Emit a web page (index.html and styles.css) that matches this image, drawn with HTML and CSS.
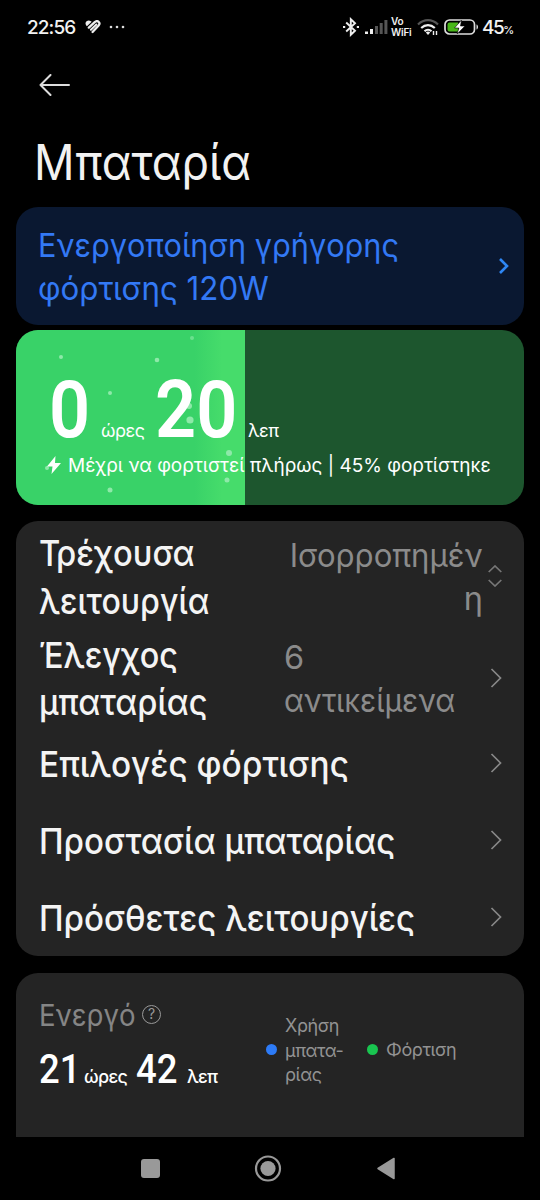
FILE: index.html
```html
<!DOCTYPE html>
<html lang="el">
<head>
<meta charset="utf-8">
<title>Μπαταρία</title>
<link rel="stylesheet" href="styles.css">
</head>
<body>
<div class="screen">
  <header class="status">
    <span class="clock">22:56</span>
    <svg class="heart" width="16" height="14" viewBox="0 0 16 14" fill="none" stroke="#eee" stroke-linecap="round"><path d="M2 5.200C0 2.500 3 .2 5.500 1.800L2.200 5Z" fill="#eee" stroke-width="1.500"/><path d="M3.800 7.600 9.700 2.100C12.500-.2 16 2.500 13.600 5.600L7.600 12" stroke-width="2.300"/><path d="M5.900 9.800 11.400 4.500" stroke-width="2"/></svg>
    <svg class="dots" width="16" height="4" viewBox="0 0 16 4" fill="#ddd"><circle cx="2" cy="2" r="1.300"/><circle cx="8" cy="2" r="1.300"/><circle cx="14" cy="2" r="1.300"/></svg>
    <div class="status-right">
      <svg class="bt" width="18" height="20" viewBox="0 0 18 20" fill="none" stroke="#eee" stroke-width="1.900"><path d="M4.200 5.500 13 13.700 8.800 17.800V2.200L13 6.300 4.200 14.500"/><path d="M1 10h2.200M14.800 10H17"/></svg>
      <svg class="signal" width="23" height="15" viewBox="0 0 23 15"><path fill="#eee" d="M0 11.500h3V14H0zM5 9h3v5H5z"/><path fill="#555" d="M10 6h3v8h-3zM14.700 3h3v11h-3zM19.400 0h3v14h-3z"/></svg>
      <span class="vowifi"><span>Vo</span><span>WiFi</span></span>
      <svg class="wifi" width="22" height="17" viewBox="0 0 22 17" fill="none" stroke-width="2.200"><path d="M1 5.500C7-.3 15-.3 21 5.500" stroke="#555"/><path d="M4.200 9c4-3.800 9.600-3.800 13.600 0M7.500 12.200c2-1.800 5-1.800 7 0" stroke="#eee"/><path d="m11 16-2.200-2.500a3.500 3.500 0 0 1 4.400 0z" fill="#eee"/><path d="M16.500 12v4M19.500 12v4" stroke="#eee" stroke-width="1.400"/></svg>
      <svg class="cell" width="36" height="16" viewBox="0 0 36 16"><rect x="1" y="1" width="29.500" height="14" rx="4.500" fill="none" stroke="#ddd" stroke-width="1.700"/><path d="M5.500 3.500H14v9H5.500a2 2 0 0 1-2-2v-5a2 2 0 0 1 2-2z" fill="#48b618"/><path d="M32.500 5.500c2 .5 2 4.500 0 5z" fill="#ddd"/><path d="M17.500 1 10.500 9h4.300l-1.600 6L21 7h-4.500z" fill="#fff" stroke="#000" stroke-width=".6"/></svg>
      <span class="pct">45<small>%</small></span>
    </div>
  </header>
  <main class="page">
    <svg class="back" width="32" height="22" viewBox="0 0 32 22" fill="none" stroke="#ddd" stroke-width="2" stroke-linecap="round" stroke-linejoin="round"><path d="M30 11H1.500M11.500 1 1.500 11l10 10"/></svg>
    <h1 class="title">Μπαταρία</h1>
    <section class="banner">
      <p class="banner-text"><span class="b1">Ενεργοποίηση γρήγορης</span><br><span class="b2">φόρτισης 120W</span></p>
      <svg width="12" height="18" viewBox="0 0 12 18" fill="none" stroke="#2e87f5" stroke-width="2.600"><path d="m2 2 7 7-7 7"/></svg>
    </section>
    <section class="charge">
      <div class="charge-fill">
        <svg width="229" height="175" viewBox="0 0 229 175" fill="#8ee9a9"><circle cx="45" cy="27" r="2"/><circle cx="141" cy="30" r="2.300"/><circle cx="176" cy="8" r="2" opacity=".6"/><circle cx="94" cy="63" r="2"/><circle cx="173" cy="76" r="3"/><circle cx="174" cy="90" r="3.600"/><circle cx="213" cy="123" r="3"/><circle cx="211" cy="150" r="2.500"/><circle cx="94" cy="160" r="2.500"/><circle cx="31" cy="138" r="2"/></svg>
      </div>
      <div class="charge-body">
        <div class="time"><b class="n0">0</b><span class="u1">ώρες</span><b class="n20">20</b><span class="u2">λεπ</span></div>
        <div class="until"><svg width="14" height="18" viewBox="0 0 14 18" fill="#fff"><path d="M8.500 0 0 10.500h5.500L4.500 18 14 7H8z"/></svg><span>Μέχρι να φορτιστεί πλήρως | 45% φορτίστηκε</span></div>
      </div>
    </section>
    <section class="list">
      <div class="row mode"><span class="label"><span class="l1">Τρέχουσα</span><br><span class="l2">λειτουργία</span></span><span class="value right"><span class="v1">Ισορροπημέν</span><br>η</span>
        <svg class="updown" width="14" height="22" viewBox="0 0 14 22" fill="none" stroke="#777" stroke-width="1.700"><path d="m.7 7 6.300-6 6.300 6M.7 15 7 21l6.300-6"/></svg></div>
      <div class="row check"><span class="label"><span class="l3">Έλεγχος</span><br><span class="l4">μπαταρίας</span></span><span class="value left">6<br><span class="v2">αντικείμενα</span></span>
        <svg class="chev" width="12" height="20" viewBox="0 0 12 20" fill="none" stroke="#888" stroke-width="1.700"><path d="m1.500 1 9 9-9 9"/></svg></div>
      <div class="row"><span class="label l5">Επιλογές φόρτισης</span><svg class="chev" width="12" height="20" viewBox="0 0 12 20" fill="none" stroke="#888" stroke-width="1.700"><path d="m1.500 1 9 9-9 9"/></svg></div>
      <div class="row"><span class="label l6">Προστασία μπαταρίας</span><svg class="chev" width="12" height="20" viewBox="0 0 12 20" fill="none" stroke="#888" stroke-width="1.700"><path d="m1.500 1 9 9-9 9"/></svg></div>
      <div class="row"><span class="label l7">Πρόσθετες λειτουργίες</span><svg class="chev" width="12" height="20" viewBox="0 0 12 20" fill="none" stroke="#888" stroke-width="1.700"><path d="m1.500 1 9 9-9 9"/></svg></div>
    </section>
    <section class="usage">
      <div class="active">
        <div class="active-head"><span class="active-label">Ενεργό</span><span class="help">?</span></div>
        <div class="active-time"><b class="a1">21</b><span class="a2">ώρες</span><b class="a3">42</b><span class="a4">λεπ</span></div>
      </div>
      <div class="legend"><i class="dot blue"></i><span class="g1">Χρήση<br>μπατα-<br>ρίας</span><i class="dot green"></i><span class="g2">Φόρτιση</span></div>
    </section>
  </main>
  <nav class="nav">
    <svg width="540" height="63" viewBox="0 0 540 63" fill="#999"><rect x="141" y="22" width="19" height="19" rx="3"/><circle cx="268" cy="31.500" r="12" fill="none" stroke="#999" stroke-width="2.200"/><circle cx="268" cy="31.500" r="7.600"/><path d="M394 21.500v20l-16-10z" stroke="#999" stroke-width="1.500" stroke-linejoin="round"/></svg>
  </nav>
</div>
</body>
</html>
```
FILE: styles.css
```css
* { box-sizing: border-box; }
body { margin: 0; background: #000; font-family: Inter, "Noto Sans", sans-serif; color: #f2f2f2; }
h1, p { margin: 0; font-weight: 400; }
svg { display: block; flex: none; }
span { white-space: nowrap; }
.screen { width: 540px; height: 1200px; overflow: hidden; display: flex; flex-direction: column; background: #000; }

.status { height: 54px; padding: 0 27px; display: flex; align-items: center; flex: none; }
.clock { width: 48px; font-size: 19px; font-weight: 500; letter-spacing: -0.900px; }
.heart { margin-left: 10px; }
.dots { margin-left: 8px; }
.status-right { margin-left: auto; display: flex; align-items: center; }
.signal { margin-left: 5px; }
.vowifi { display: flex; flex-direction: column; width: 21px; margin-left: 3px; font-size: 10px; line-height: 11px; font-weight: 600; letter-spacing: -0.200px; }
.vowifi span { height: 11px; }
.wifi { margin-left: 5px; }
.cell { margin-left: 5px; }
.pct { width: 31px; margin-left: 2px; font-size: 19px; font-weight: 500; letter-spacing: -1.500px; }
.pct small { font-size: 11px; }

.page { height: 1083px; padding: 0 16px; flex: none; overflow: hidden; }
.back { margin: 20px 0 0 23px; }
.title { font-size: 49px; line-height: 60px; margin: 37px 0 0 18px; color: #f2f2f2; white-space: nowrap; height: 74px; transform: scaleX(0.915); transform-origin: left; }

.b1, .b2, .l1, .l2, .l3, .l4, .l5, .l6, .l7, .v1, .v2 { display: inline-block; transform-origin: left; }

.banner { height: 118px; border-radius: 22px; background: #0a1831; display: flex; align-items: center; justify-content: space-between; padding: 2px 14px 0 22px; color: #3379f5; }
.banner-text { font-size: 33px; line-height: 43px; }
.banner svg { margin-bottom: 3px; }
.b1 { transform: scaleX(0.929); }
.b2 { transform: scaleX(0.947); }

.charge { height: 175px; margin-top: 5px; border-radius: 22px; background: #1d562e; overflow: hidden; display: grid; color: #fff; }
.charge-fill { grid-area: 1 / 1; width: 229px; background: linear-gradient(90deg, #39d268 78%, #46dc6b 90%); }
.charge-body { grid-area: 1 / 1; z-index: 1; padding: 34px 0 0 31px; }
.time { display: flex; align-items: baseline; height: 89px; line-height: 92px; white-space: nowrap; }
.time b { font: 600 80px/92px Roboto, sans-serif; transform: scaleX(0.9); transform-origin: left; }
.time span { font-size: 18px; letter-spacing: -0.500px; }
.n0 { width: 52px; margin-left: 2px; }
.u1 { width: 54px; }
.n20 { width: 93px; }
.until { display: flex; align-items: center; height: 24px; font-size: 19px; }
.until span { margin-left: 7px; }

.list { height: 435px; margin-top: 16px; border-radius: 22px; background: #242424; padding: 6px 22px 0 23px; }
.row { display: flex; align-items: center; height: 77px; }
.mode { height: 101px; }
.check { height: 98px; padding-top: 4px; }
.label { font-size: 36px; line-height: 47.500px; font-weight: 500; color: #f4f4f4; }
.l1 { transform: scaleX(0.908); }
.l2 { transform: scaleX(0.892); }
.l3 { transform: scaleX(0.9); }
.l4 { transform: scaleX(0.905); }
.l5 { transform: scaleX(0.928); }
.l6 { transform: scaleX(0.918); }
.l7 { transform: scaleX(0.918); }
.value { font-size: 32.500px; line-height: 43px; color: #8b8b8b; }
.v1 { transform: scaleX(0.957); transform-origin: right; }
.v2 { transform: scaleX(0.924); }
.right { margin-left: auto; text-align: right; padding-bottom: 1px; }
.updown { margin-left: 5px; }
.check .label { width: 245px; }
.row > svg { margin-bottom: 3px; }
.chev { margin-left: auto; }

.usage { height: 190px; margin-top: 17px; border-radius: 22px; background: #242424; display: flex; padding: 0 23px; }
.active { width: 227px; padding-top: 24px; }
.active-head { display: flex; align-items: center; height: 36px; }
.active-label { width: 96px; font-size: 30px; color: #858585; transform: scaleX(0.92); transform-origin: left; }
.help { width: 19px; height: 19px; border: 1.500px solid #999; border-radius: 50%; font-size: 14px; line-height: 16px; text-align: center; color: #999; margin: 0 0 2px 7px; }
.active-time { display: flex; align-items: baseline; line-height: 48px; height: 48px; margin-top: 12px; color: #fff; }
.active-time b { font: 500 41px/48px Roboto, sans-serif; transform: scaleX(0.89); transform-origin: left; }
.active-time span { font-size: 18px; font-weight: 500; letter-spacing: -0.700px; }
.a1 { width: 45px; }
.a2 { width: 52px; }
.a3 { width: 51px; }
.legend { display: flex; align-items: center; height: 154px; font-size: 18px; line-height: 24.500px; color: #929292; letter-spacing: -0.400px; }
.dot { width: 11px; height: 11px; border-radius: 50%; flex: none; margin-bottom: 1px; }
.blue { background: #2d7bf7; }
.green { background: #19c550; }
.g1 { width: 59px; margin-left: 8px; padding-top: 2px; }
.green { margin-left: 23px; }
.g2 { margin-left: 8px; padding-top: 1px; }
.nav { height: 63px; flex: none; background: #000; }
```
